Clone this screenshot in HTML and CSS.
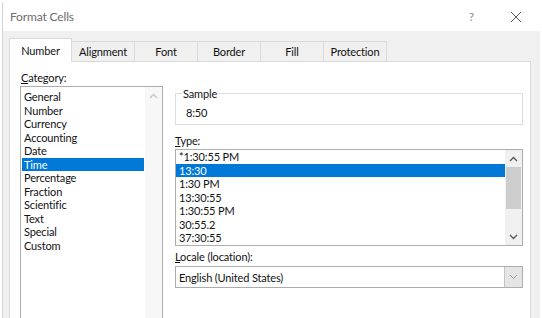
FILE: index.html
```html
<!DOCTYPE html>
<html lang="en">
<head>
    <meta charset="utf-8">
    <link rel="stylesheet" href="styles.css">
</head>
<body>
    <div class="dialog">
        <div class="titlebar">
            <span class="title">Format Cells</span>
            <span class="help">?</span>
            <svg class="close" width="12" height="12" viewBox="0 0 12 12">
                <path d="M1 1 L11 11 M11 1 L1 11" stroke="#555" stroke-width="1" fill="none"/>
            </svg>
        </div>

        <div class="tabs">
            <div class="tab active">Number</div>
            <div class="tab">Alignment</div>
            <div class="tab">Font</div>
            <div class="tab">Border</div>
            <div class="tab">Fill</div>
            <div class="tab">Protection</div>
        </div>

        <div class="panel">
            <div class="left">
                <div class="label"><u>C</u>ategory:</div>
                <div class="listbox category">
                    <div class="items">
                        <div class="item">General</div>
                        <div class="item">Number</div>
                        <div class="item">Currency</div>
                        <div class="item">Accounting</div>
                        <div class="item">Date</div>
                        <div class="item selected">Time</div>
                        <div class="item">Percentage</div>
                        <div class="item">Fraction</div>
                        <div class="item">Scientific</div>
                        <div class="item">Text</div>
                        <div class="item">Special</div>
                        <div class="item">Custom</div>
                    </div>
                    <div class="scrollbar light">
                        <svg class="arrow" width="9" height="6" viewBox="0 0 9 6">
                            <path d="M1 5 L4.5 1.5 L8 5" stroke="#c4c4c4" stroke-width="1.3" fill="none"/>
                        </svg>
                    </div>
                </div>
            </div>

            <div class="right">
                <fieldset class="sample">
                    <legend>Sample</legend>
                    <div class="sample-value">8:50</div>
                </fieldset>

                <div class="label type-label"><u>T</u>ype:</div>
                <div class="listbox type">
                    <div class="items">
                        <div class="item">*1:30:55 PM</div>
                        <div class="item selected">13:30</div>
                        <div class="item">1:30 PM</div>
                        <div class="item">13:30:55</div>
                        <div class="item">1:30:55 PM</div>
                        <div class="item">30:55.2</div>
                        <div class="item">37:30:55</div>
                    </div>
                    <div class="scrollbar">
                        <svg class="arrow" width="9" height="6" viewBox="0 0 9 6">
                            <path d="M1 5 L4.5 1.5 L8 5" stroke="#555" stroke-width="1.3" fill="none"/>
                        </svg>
                        <div class="thumb"></div>
                        <svg class="arrow" width="9" height="6" viewBox="0 0 9 6">
                            <path d="M1 1 L4.5 4.5 L8 1" stroke="#555" stroke-width="1.3" fill="none"/>
                        </svg>
                    </div>
                </div>

                <div class="label locale-label"><u>L</u>ocale (location):</div>
                <div class="combo">
                    <span class="combo-text">English (United States)</span>
                    <div class="combo-btn">
                        <svg width="9" height="6" viewBox="0 0 9 6">
                            <path d="M1 1 L4.5 4.5 L8 1" stroke="#999" stroke-width="1" fill="none"/>
                        </svg>
                    </div>
                </div>
            </div>
        </div>
    </div>
</body>
</html>
```

FILE: styles.css
```css
html, body {
    margin: 0;
    height: 100%;
    overflow: hidden;
}
body {
    background: #fff;
    font-family: Lato, "Noto Sans", sans-serif;
    font-size: 11px;
    letter-spacing: -0.15px;
    color: #111;
}

.dialog {
    margin: 2px 2px 0 2px;
    height: 316px;
    background: #f0f0f0;
    border-left: 1px solid #d4d4d4;
    display: flex;
    flex-direction: column;
    box-sizing: border-box;
}

.titlebar {
    flex-shrink: 0;
    height: 29px;
    background: #fff;
    display: flex;
    align-items: center;
    padding: 0 0 0 7px;
}
.title {
    font-size: 12px;
    color: #6d6d6d;
    flex: 1;
}
.help {
    font-size: 12px;
    color: #8a8a8a;
    margin-right: 36px;
}
.close {
    margin-right: 18px;
}

.tabs {
    flex-shrink: 0;
    display: flex;
    align-items: flex-end;
    margin-top: 7px;
    padding-left: 6px;
    height: 23px;
}
.tab {
    width: 63px;
    height: 20px;
    box-sizing: border-box;
    border: 1px solid #d9d9d9;
    border-left: none;
    border-bottom: none;
    display: flex;
    align-items: center;
    justify-content: center;
    background: #f0f0f0;
}
.tab.active {
    height: 24px;
    background: #fff;
    border-left: 1px solid #d9d9d9;
    margin-bottom: -1px;
    position: relative;
    z-index: 1;
}

.panel {
    flex: 1;
    min-height: 0;
    overflow: hidden;
    background: #fff;
    border: 1px solid #d9d9d9;
    border-bottom: none;
    margin: 0 9px 0 6px;
    display: grid;
    grid-template-columns: 143px 1fr;
    align-items: start;
    column-gap: 12px;
    padding: 8px 7px 0 10px;
}

.label {
    height: 16px;
    line-height: 16px;
}
.left .label {
    padding-left: 1px;
}

.listbox {
    border: 1px solid #adadad;
    display: flex;
    box-sizing: border-box;
}
.listbox .items {
    flex: 1;
    padding: 3px 1px 0 1px;
}
.item {
    height: 13.5px;
    line-height: 13.5px;
    padding-left: 2px;
    white-space: nowrap;
}
.item.selected {
    background: #0078d7;
    color: #fff;
}
.category {
    height: 240px;
}

.scrollbar {
    width: 17px;
    background: #f0f0f0;
    display: flex;
    flex-direction: column;
    align-items: center;
}
.scrollbar.light {
    background: #f7f7f7;
}
.arrow {
    margin: 6px 0 5px;
}
.thumb {
    width: 15px;
    flex: 1;
    background: #cdcdcd;
    margin-bottom: 19px;
}

.sample {
    margin: 17px 0 0 0;
    padding: 0 0 0 10px;
    border: 1px solid #dcdcdc;
    height: 38px;
    box-sizing: border-box;
}
.sample legend {
    padding: 0 1px;
    margin-left: -4px;
    line-height: 13px;
}
.sample-value {
    line-height: 14px;
    margin-top: 6px;
}

.type-label {
    margin-top: 8px;
    margin-bottom: 0;
}
.type {
    height: 97px;
}
.type .items {
    padding: 0;
}
.type .item {
    padding-left: 3px;
}

.locale-label {
    margin-top: 3px;
    margin-bottom: 1px;
}
.combo {
    height: 22px;
    border: 1px solid #adadad;
    box-sizing: border-box;
    display: flex;
    align-items: center;
}
.combo-text {
    flex: 1;
    padding-left: 3px;
}
.combo-btn {
    width: 17px;
    height: 100%;
    background: #e5e5e5;
    border-left: 1px solid #c4c4c4;
    display: flex;
    align-items: center;
    justify-content: center;
}
```
